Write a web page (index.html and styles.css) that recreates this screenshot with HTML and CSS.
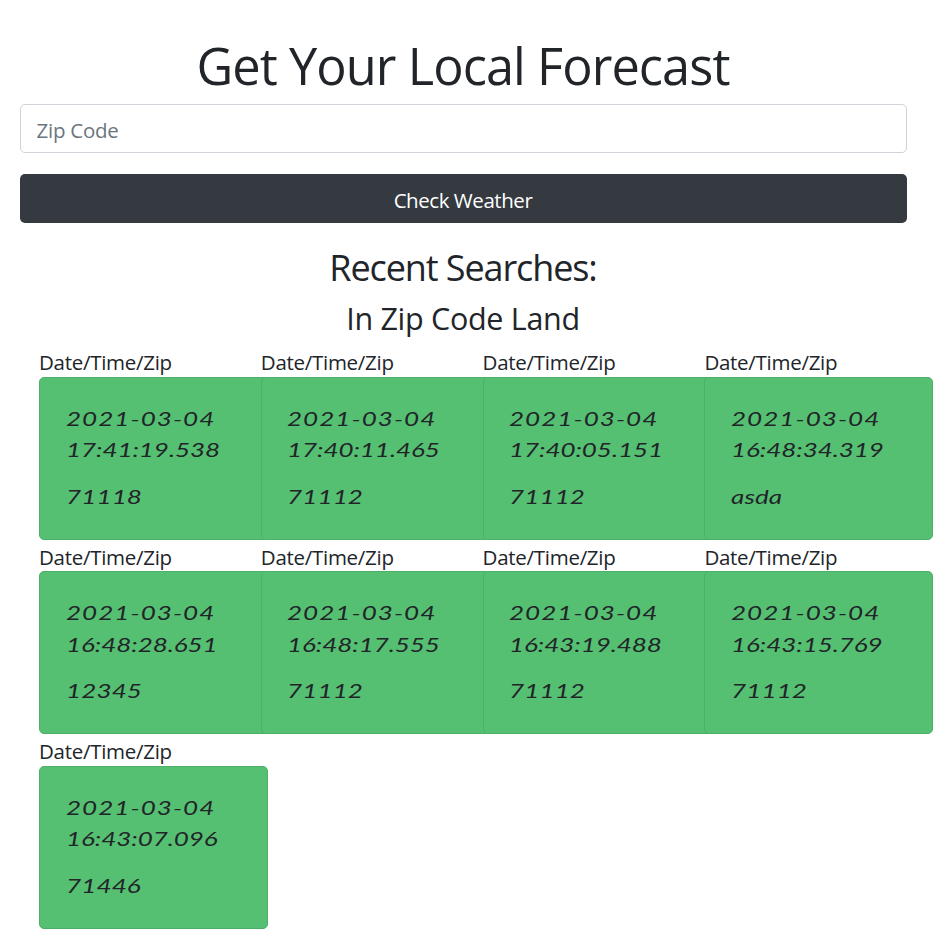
FILE: index.html
```html
<!DOCTYPE html>
<html lang="en">
<head>
<meta charset="utf-8">
<title>Local Forecast</title>
<link rel="stylesheet" href="styles.css">
</head>
<body>
<main class="page">
  <form class="search">
    <h1 class="title"><span>Get Your Local Forecast</span></h1>
    <input class="zip-input" type="text" placeholder="Zip Code">
    <button class="submit" type="button">Check Weather</button>
  </form>
  <h2 class="recent"><span>Recent Searches:</span></h2>
  <h3 class="subtitle"><span>In Zip Code Land</span></h3>
  <section class="grid">
    <article class="entry"><div class="label">Date/Time/Zip</div><div class="card"><p class="date"><span class="day">2021-03-04</span><span class="time">17:41:19.538</span></p><p><span>71118</span></p></div></article>
    <article class="entry"><div class="label">Date/Time/Zip</div><div class="card"><p class="date"><span class="day">2021-03-04</span><span class="time">17:40:11.465</span></p><p><span>71112</span></p></div></article>
    <article class="entry"><div class="label">Date/Time/Zip</div><div class="card"><p class="date"><span class="day">2021-03-04</span><span class="time">17:40:05.151</span></p><p><span>71112</span></p></div></article>
    <article class="entry"><div class="label">Date/Time/Zip</div><div class="card"><p class="date"><span class="day">2021-03-04</span><span class="time">16:48:34.319</span></p><p><span>asda</span></p></div></article>
    <article class="entry"><div class="label">Date/Time/Zip</div><div class="card"><p class="date"><span class="day">2021-03-04</span><span class="time">16:48:28.651</span></p><p><span>12345</span></p></div></article>
    <article class="entry"><div class="label">Date/Time/Zip</div><div class="card"><p class="date"><span class="day">2021-03-04</span><span class="time">16:48:17.555</span></p><p><span>71112</span></p></div></article>
    <article class="entry"><div class="label">Date/Time/Zip</div><div class="card"><p class="date"><span class="day">2021-03-04</span><span class="time">16:43:19.488</span></p><p><span>71112</span></p></div></article>
    <article class="entry"><div class="label">Date/Time/Zip</div><div class="card"><p class="date"><span class="day">2021-03-04</span><span class="time">16:43:15.769</span></p><p><span>71112</span></p></div></article>
    <article class="entry"><div class="label">Date/Time/Zip</div><div class="card"><p class="date"><span class="day">2021-03-04</span><span class="time">16:43:07.096</span></p><p><span>71446</span></p></div></article>
  </section>
</main>
</body>
</html>
```
FILE: styles.css
```css
* { box-sizing: border-box; }
html { overflow: hidden; }
body {
  margin: 0;
  background: #fff;
  color: #212529;
  font: 400 20.5px/31.5px "Open Sans", "Noto Sans", sans-serif;
}
.page { width: 887px; margin-left: 19.5px; padding-top: 34px; }
.search { display: flex; flex-direction: column; }
h1, h2, h3, p { margin: 0; font-weight: 400; }
.title, .recent, .subtitle { text-align: center; white-space: nowrap; }
.title { font-size: 50.5px; line-height: 63px; height: 70px; letter-spacing: -0.92px; }
.zip-input {
  width: 100%;
  height: 49px;
  padding: 3px 16px 0;
  border: 1px solid #ced4da;
  border-radius: 5px;
  font: inherit;
  letter-spacing: -0.25px;
  background: #fff;
}
.zip-input::placeholder { color: #6c757d; opacity: 1; }
.submit {
  width: 100%;
  height: 49px;
  margin-top: 21px;
  padding: 4px 0 0;
  border: 0;
  border-radius: 5px;
  background: #343a40;
  color: #fff;
  font: inherit;
  letter-spacing: -0.45px;
}
.recent { margin-top: 23px; font-size: 36px; line-height: 44px; letter-spacing: -1.1px; }
.subtitle { margin-top: 9px; font-size: 30.5px; line-height: 38px; letter-spacing: -0.3px; }
.grid { display: grid; grid-template-columns: repeat(4, 221.8px); margin: 8px 0 0 19.5px; }
.entry { height: 194.5px; }
.label { height: 31.5px; line-height: 34px; letter-spacing: -0.28px; white-space: nowrap; }
.card {
  width: 229px;
  height: 163px;
  padding: 25px 25.5px;
  border: 1px solid #4daf68;
  border-radius: 5px;
  background: #56c072;
  font-family: Lato, sans-serif;
  font-style: italic;
  font-size: 20px;
}
.card span {
  display: block;
  width: max-content;
  transform: scaleX(1.3);
  transform-origin: left;
  letter-spacing: 0.1px;
}
.card .day { letter-spacing: 0.8px; }
.card .time { letter-spacing: -0.05px; }
.date { margin-bottom: 15px; }
```
